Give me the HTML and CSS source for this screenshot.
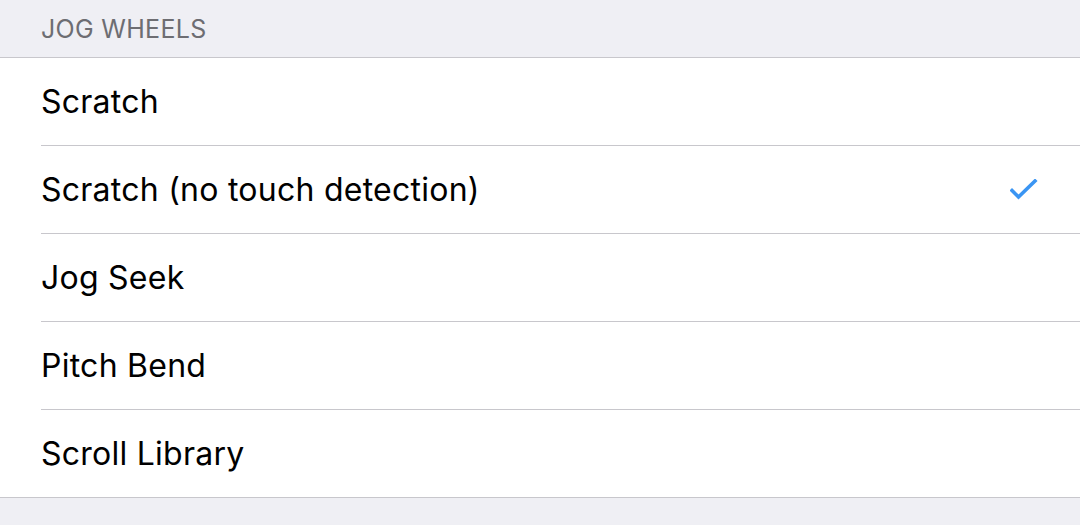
FILE: index.html
```html
<!DOCTYPE html>
<html>
<head>
<meta charset="utf-8">
<link rel="stylesheet" href="styles.css">
</head>
<body>
<div class="page">
  <div class="section-header">JOG WHEELS</div>
  <ul class="list">
    <li class="row"><span class="label">Scratch</span></li>
    <li class="row"><span class="label">Scratch (no touch detection)</span>
      <svg class="check" width="28" height="22" viewBox="0 0 28 22"><polyline points="2,11.5 8.5,18 25,2" fill="none" stroke="#3a95f3" stroke-width="3.6" stroke-linecap="square" stroke-linejoin="miter"/></svg>
    </li>
    <li class="row"><span class="label">Jog Seek</span></li>
    <li class="row"><span class="label">Pitch Bend</span></li>
    <li class="row"><span class="label">Scroll Library</span></li>
  </ul>
</div>
</body>
</html>
```
FILE: styles.css
```css
html, body {
  margin: 0;
  padding: 0;
  background: #efeff4;
}
.page {
  width: 1080px;
  height: 525px;
  background: #efeff4;
  font-family: Inter, "Noto Sans", sans-serif;
}
.section-header {
  height: 57px;
  box-sizing: border-box;
  padding: 14px 0 0 41px;
  font-size: 25px;
  line-height: 30px;
  color: #6d6d72;
  letter-spacing: 0.3px;
}
.list {
  list-style: none;
  margin: 0;
  padding: 0 0 0 41px;
  background: #fff;
  border-top: 1px solid #c8c7cc;
  border-bottom: 1px solid #c8c7cc;
}
.row {
  height: 87px;
  display: flex;
  align-items: center;
  justify-content: space-between;
  padding-right: 41px;
  border-bottom: 1px solid #c8c7cc;
}
.row:last-child {
  border-bottom: none;
}
.label {
  font-size: 32px;
  color: #000;
  letter-spacing: 0.25px;
}
.check {
  display: block;
  margin-right: 1px;
}
```
